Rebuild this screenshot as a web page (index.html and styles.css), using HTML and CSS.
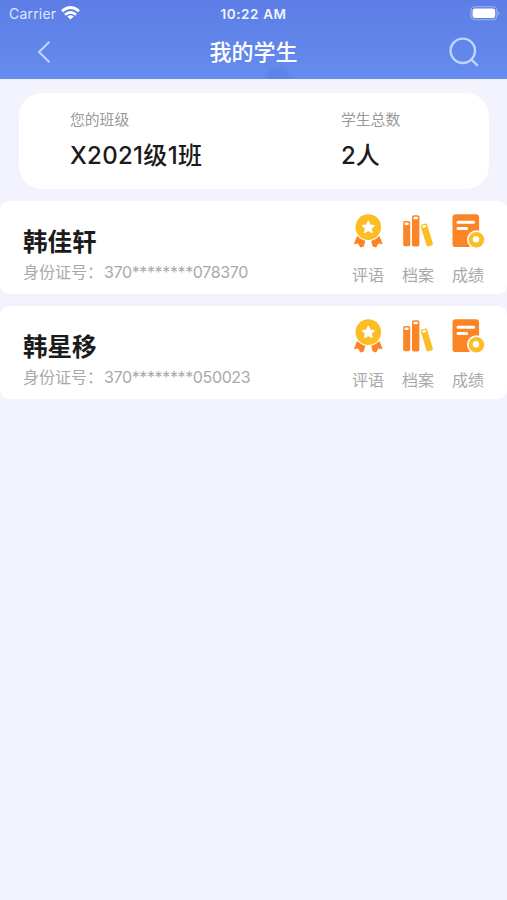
FILE: index.html
```
<!DOCTYPE html>
<html lang="zh-CN">
<head>
  <meta charset="utf-8">
  <meta name="viewport" content="width=device-width">
  <title>我的学生</title>
  <link rel="stylesheet" href="styles.css">
</head>
<body>
  <svg class="sprite">
    <symbol id="medal" viewBox="0 0 36 36">
      <path fill="#fb8526" d="M7 23L3.800 31.200l4.200-.6 2.400 4 3.400-1.200L15.400 27.600zM29.500 23l3.200 8.200-4.200-.6-2.400 4-3.400-1.200L21.100 27.600z"/>
      <circle cx="18.300" cy="14.100" r="13.900" fill="#fff"/>
      <circle cx="18.300" cy="14.100" r="12.800" fill="#fdbd24"/>
      <path fill="#fff" stroke="#fff" stroke-width="1.200" stroke-linejoin="round" d="M18.300 8.300l1.800 3.800 4.100.5-3 2.800.8 4.100-3.700-2-3.700 2 .8-4.100-3-2.800 4.100-.5z"/>
    </symbol>
    <symbol id="books" viewBox="0 0 36 36">
      <rect x="3.200" y="8" width="7" height="25.200" rx="1.800" fill="#fb8526"/>
      <rect x="12" y="2.300" width="7.400" height="31.100" rx="2" fill="#fb8526"/>
      <rect x="4.600" y="9.400" width="4.200" height="2.700" rx="1.100" fill="#fff"/>
      <rect x="13.400" y="3.800" width="4.600" height="2.500" rx="1.100" fill="#fff"/>
      <g transform="rotate(-17 26.8 22)">
        <rect x="23.500" y="10.600" width="6.600" height="22.800" rx="1.800" fill="#fdbd24"/>
        <rect x="24.800" y="11.800" width="4" height="2.300" rx="1" fill="#fff"/>
      </g>
    </symbol>
    <symbol id="score" viewBox="0 0 36 36">
      <rect x="2.500" y="1.300" width="26.600" height="32.800" rx="3.200" fill="#fb8526"/>
      <path stroke="#fff" stroke-width="3" stroke-linecap="round" d="M8 9.200h15.600M8 15.600h8.600"/>
      <circle cx="26.400" cy="26.700" r="9.400" fill="#fff"/>
      <circle cx="26.400" cy="26.700" r="7.800" fill="#fdbd24"/>
      <circle cx="26" cy="26.200" r="3.200" fill="#fff"/>
    </symbol>
  </svg>

  <header class="header">
    <div class="status">
      <div class="carrier">
        <span>Carrier</span>
        <svg width="19" height="14" viewBox="0 0 19 14" fill="none" stroke="#fff" stroke-width="2.8">
          <path d="M1 5.200Q9.500-2.200 18 5.200M4 8.700q5.500-4.600 11 0"/>
          <path fill="#fff" stroke="none" d="M9.500 13.600L6.300 10.600q3.200-2.500 6.400 0z"/>
        </svg>
      </div>
      <div class="time">10:22 AM</div>
      <svg class="battery" width="31" height="15" viewBox="0 0 31 15">
        <rect x=".9" y=".8" width="26" height="13" rx="4" fill="none" stroke="#9fb3f3" stroke-width="1.1"/>
        <rect x="2.600" y="2.600" width="22.600" height="9.300" rx="2.500" fill="#fff"/>
        <path fill="#9fb3f3" d="M28.300 5q2.200 2.300 0 4.600z"/>
      </svg>
    </div>
    <div class="nav">
      <svg class="back" width="14" height="24" viewBox="0 0 14 24" fill="none" stroke="#bfd7ff" stroke-width="2">
        <path d="M12.500 1.800L2 12l10.500 10.200"/>
      </svg>
      <h1>我的学生</h1>
      <svg class="search" width="32" height="32" viewBox="0 0 32 32" fill="none" stroke="#bfd7ff" stroke-width="2.400" stroke-linecap="round">
        <circle cx="14.800" cy="14.800" r="12.200"/>
        <path d="M23.600 23.800l5.600 5.400"/>
      </svg>
    </div>
  </header>

  <div class="summary">
    <div class="class-name">
      <p>您的班级</p>
      <strong>X2021级1班</strong>
    </div>
    <div>
      <p>学生总数</p>
      <strong>2人</strong>
    </div>
  </div>

  <ul class="list">
    <li class="student">
      <div class="info">
        <h2>韩佳轩</h2>
        <p><span class="id-label">身份证号：</span><span class="id-num">370********078370</span></p>
      </div>
      <div class="actions">
        <a><svg><use href="#medal"/></svg><span>评语</span></a>
        <a><svg><use href="#books"/></svg><span>档案</span></a>
        <a><svg><use href="#score"/></svg><span>成绩</span></a>
      </div>
    </li>
    <li class="student">
      <div class="info">
        <h2>韩星移</h2>
        <p><span class="id-label">身份证号：</span><span class="id-num">370********050023</span></p>
      </div>
      <div class="actions">
        <a><svg><use href="#medal"/></svg><span>评语</span></a>
        <a><svg><use href="#books"/></svg><span>档案</span></a>
        <a><svg><use href="#score"/></svg><span>成绩</span></a>
      </div>
    </li>
  </ul>
</body>
</html>
```
FILE: styles.css
```
*{
  margin: 0;
  padding: 0;
  box-sizing: border-box;
}
body{
  min-height: 900px;
  background: #f2f3fc;
  font-family: Inter, "Noto Sans CJK SC", sans-serif;
  color: #1b1b1b;
}
svg{
  display: block;
}
.sprite{
  display: none;
}
.header{
  height: 79px;
  color: #fff;
  background: radial-gradient(ellipse 15px 12px at 278px 78px, #5d83e8 60%, transparent), linear-gradient(#5c7de5, #658cee);
}
.status{
  display: grid;
  grid-template-columns: 1fr auto 1fr;
  align-items: center;
  height: 27px;
  padding: 0 6px 0 9px;
}
.carrier{
  display: flex;
  gap: 5px;
  font-size: 14px;
  line-height: 27px;
  letter-spacing: .2px;
  color: #dfe7ff;
}
.carrier svg{
  margin-top: 6px;
}
.time{
  margin-left: -3px;
  font-size: 13.5px;
  font-weight: 600;
  letter-spacing: .6px;
  color: #f0f4ff;
}
.battery{
  justify-self: end;
}
.nav{
  display: flex;
  align-items: center;
  justify-content: space-between;
  height: 50px;
  padding: 0 27px 0 37px;
}
.nav h1{
  padding-left: 8px;
  font-size: 22px;
  font-weight: 500;
  line-height: 50px;
}
/* 班级信息 */
.summary{
  display: flex;
  height: 96px;
  margin: 14px 18px 12px 19px;
  padding: 16px 51px;
  border-radius: 23px;
  background: #fff;
}
.class-name{
  width: 271px;
}
.summary p{
  font-size: 14.8px;
  line-height: 23px;
  color: #999;
}
.summary strong{
  display: block;
  margin-top: 7px;
  font-size: 24px;
  font-weight: 500;
  line-height: 34px;
  letter-spacing: -.1px;
}
.class-name strong{
  letter-spacing: .3px;
}
/* 学生列表 */
.list{
  display: flex;
  flex-direction: column;
  gap: 12px;
  list-style: none;
}
.student{
  display: flex;
  justify-content: space-between;
  height: 93px;
  padding: 12px 14px 0 23px;
  border-radius: 9px;
  background: #fff;
}
.info{
  padding-top: 11px;
}
.info h2{
  font-size: 24.500px;
  font-weight: 700;
  line-height: 36px;
}
.info p{
  display: flex;
  font-size: 16px;
  line-height: 24px;
  color: #a9a9a9;
}
.id-label{
  width: 81px;
  white-space: nowrap;
}
.id-num{
  letter-spacing: -.37px;
}
.actions{
  display: flex;
}
.actions a{
  display: flex;
  flex-direction: column;
  align-items: center;
  width: 50px;
  font-size: 16px;
  line-height: 24px;
  color: #a9a9a9;
}
.actions svg{
  width: 36px;
  height: 36px;
  margin-bottom: 14px;
}
```
